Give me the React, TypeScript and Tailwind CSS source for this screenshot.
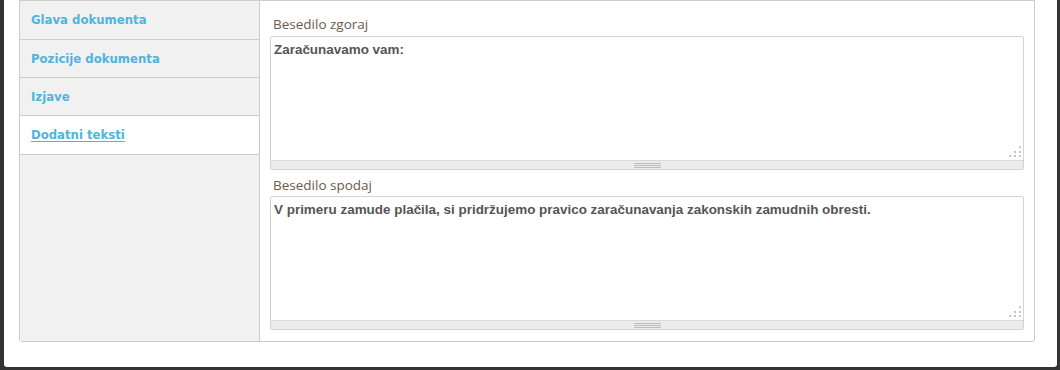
import React from "react";

const tabs = [
  { label: "Glava dokumenta", h: "h-[39px]" },
  { label: "Pozicije dokumenta", h: "h-[38px]" },
  { label: "Izjave", h: "h-[38px]" },
  { label: "Dodatni teksti", h: "h-[39px]", active: true },
];

function ResizeDots() {
  return (
    <svg
      className="absolute right-[1px] bottom-[1px]"
      width="14"
      height="13"
      viewBox="0 0 14 13"
    >
      <rect x="11" y="0" width="2" height="2" fill="#c4c4c4" />
      <rect x="6" y="5" width="2" height="2" fill="#c4c4c4" />
      <rect x="11" y="5" width="2" height="2" fill="#c4c4c4" />
      <rect x="1" y="9" width="2" height="2" fill="#c4c4c4" />
      <rect x="6" y="9" width="2" height="2" fill="#c4c4c4" />
      <rect x="11" y="9" width="2" height="2" fill="#c4c4c4" />
    </svg>
  );
}

function TextBox({ text }: { text: string }) {
  return (
    <div className="flex h-[134px] flex-col rounded-[2px] border border-[#d3d3d3] bg-white">
      <div className="relative flex-1 px-[3px] pt-[5px] text-[13.45px] leading-[15px] font-bold text-[#555555] [font-family:'Liberation_Sans',Arial,sans-serif]">
        {text}
        <ResizeDots />
      </div>
      <div className="flex h-[9px] flex-col items-center justify-center gap-[1px] border-t border-[#dadada] bg-[#ececec]">
        <div className="h-px w-[27px] bg-[#bdbdbd]" />
        <div className="h-px w-[27px] bg-[#bdbdbd]" />
        <div className="h-px w-[27px] bg-[#bdbdbd]" />
      </div>
    </div>
  );
}

export default function App() {
  return (
    <div className="h-[370px] w-[1060px] overflow-hidden bg-[#333333]">
      <div className="ml-[4px] h-[367px] w-[1053px] rounded-b-[3px] bg-white">
        <div className="ml-[15px] flex h-[342px] w-[1016px] rounded-b-[3px] border border-[#cccccc]">
          <div className="flex w-[240px] flex-col border-r border-[#cccccc] bg-[#f1f1f1]">
            {tabs.map((t) => (
              <div
                key={t.label}
                className={`flex ${t.h} items-center border-b border-[#cccccc] pl-[11px] ${
                  t.active ? "bg-white" : "bg-[#f1f1f1]"
                }`}
              >
                <span
                  className={`text-[13px] font-bold text-[#4fb4df] [font-family:'DejaVu_Sans_Condensed','DejaVu_Sans',Verdana,sans-serif] ${
                    t.active ? "underline underline-offset-[2px]" : ""
                  }`}
                >
                  {t.label}
                </span>
              </div>
            ))}
          </div>
          <div className="flex-1 px-[10px] pt-[14px] pb-[11px]">
            <div className="mb-[3px] h-[18px] pl-[3px] text-[13.5px] leading-[18px] text-[#6a5b4c] [font-family:'Open_Sans',sans-serif]">
              Besedilo zgoraj
            </div>
            <TextBox text="Zaračunavamo vam:" />
            <div className="mt-[6px] mb-[2px] h-[18px] pl-[3px] text-[13.5px] leading-[18px] text-[#6a5b4c] [font-family:'Open_Sans',sans-serif]">
              Besedilo spodaj
            </div>
            <TextBox text="V primeru zamude plačila, si pridržujemo pravico zaračunavanja zakonskih zamudnih obresti." />
          </div>
        </div>
      </div>
    </div>
  );
}
